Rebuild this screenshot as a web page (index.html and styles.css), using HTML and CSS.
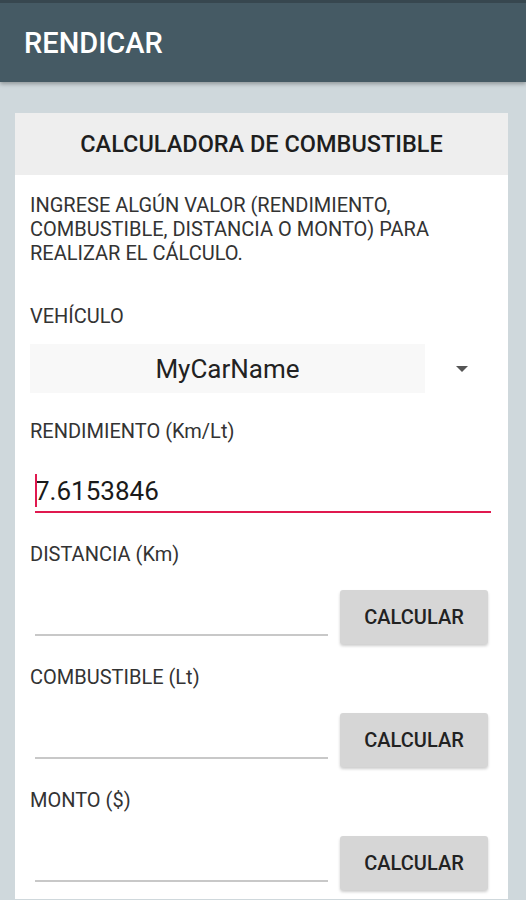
FILE: index.html
```html
<!DOCTYPE html>
<html lang="es">
<head>
    <meta charset="UTF-8">
    <meta name="viewport" content="width=device-width, initial-scale=1.0">
    <title>Rendicar</title>
    <link rel="stylesheet" href="styles.css">
</head>
<body>
    <header class="appbar">
        <h1>RENDICAR</h1>
    </header>

    <div class="container">
        <section class="card">
            <div class="card-title">CALCULADORA DE COMBUSTIBLE</div>
            <div class="card-body">
                <p class="intro">INGRESE ALGÚN VALOR (RENDIMIENTO, COMBUSTIBLE, DISTANCIA O MONTO) PARA REALIZAR EL CÁLCULO.</p>

                <div class="label">VEHÍCULO</div>
                <div class="spinner">
                    <div class="spinner-value">MyCarName</div>
                    <div class="spinner-arrow"></div>
                </div>

                <div class="label">RENDIMIENTO (Km/Lt)</div>
                <div class="field focused">
                    <span class="caret"></span>7.6153846
                </div>

                <div class="label">DISTANCIA (Km)</div>
                <div class="calc-row">
                    <div class="field"></div>
                    <button class="btn">CALCULAR</button>
                </div>

                <div class="label">COMBUSTIBLE (Lt)</div>
                <div class="calc-row">
                    <div class="field"></div>
                    <button class="btn">CALCULAR</button>
                </div>

                <div class="label">MONTO ($)</div>
                <div class="calc-row">
                    <div class="field"></div>
                    <button class="btn">CALCULAR</button>
                </div>
            </div>
        </section>
    </div>
</body>
</html>
```

FILE: styles.css
```css
body {
    font-family: Roboto, "Liberation Sans", sans-serif;
    margin: 0;
    padding: 0;
    background-color: #cfd8dc;
    color: #222;
    height: 900px;
    overflow: hidden;
}
.appbar {
    background-color: #455a64;
    border-top: 3px solid #37474f;
    height: 79px;
    display: flex;
    align-items: center;
    padding-left: 24px;
    box-shadow: 0 2px 4px rgba(0, 0, 0, 0.3);
}
.appbar h1 {
    margin: 0;
    color: #fff;
    font-size: 29px;
    font-weight: 500;
}
.container {
    padding: 31px 18px 0 15px;
}
.card {
    background-color: #fff;
}
.card-title {
    background-color: #eeeeee;
    height: 62px;
    display: flex;
    align-items: center;
    justify-content: center;
    font-size: 23.5px;
    font-weight: 500;
    color: #1e1e1e;
}
.card-body {
    padding: 18px 17px 9px 15px;
}
.intro {
    margin: 0;
    font-size: 20px;
    line-height: 24px;
    color: #333;
}
.label {
    font-size: 20px;
    color: #333;
    margin-top: 39px;
    line-height: 24px;
}
.spinner {
    display: flex;
    align-items: center;
    margin-top: 16px;
    height: 49px;
}
.spinner-value {
    background-color: #f8f8f8;
    width: 395px;
    height: 100%;
    display: flex;
    align-items: center;
    justify-content: center;
    font-size: 26px;
    color: #222;
}
.spinner-arrow {
    margin-left: 31px;
    width: 0;
    height: 0;
    border-left: 6px solid transparent;
    border-right: 6px solid transparent;
    border-top: 6px solid #555;
}
.spinner + .label {
    margin-top: 26px;
}
.field {
    margin-left: 5px;
    height: 40px;
    border-bottom: 2px solid #c8c8c8;
    font-size: 26px;
    line-height: 40px;
    color: #1a1a1a;
    position: relative;
}
.field.focused {
    margin-top: 22px;
    padding-top: 6px;
    border-bottom-color: #e0194f;
}
.caret {
    position: absolute;
    left: 0;
    top: 9px;
    width: 2px;
    height: 33px;
    background-color: #e0194f;
}
.field.focused + .label {
    margin-top: 29px;
}
.calc-row {
    display: flex;
    align-items: flex-end;
    margin-top: 24px;
    height: 54px;
}
.calc-row .field {
    width: 293px;
    margin-bottom: 8px;
}
.btn {
    margin-left: 12px;
    width: 148px;
    height: 54px;
    border: none;
    border-radius: 3px;
    background-color: #d6d6d6;
    box-shadow: 0 2px 3px rgba(0, 0, 0, 0.2);
    font-family: Roboto, "Liberation Sans", sans-serif;
    font-size: 20px;
    font-weight: 500;
    color: #222;
}
.calc-row + .label {
    margin-top: 21px;
}
```
